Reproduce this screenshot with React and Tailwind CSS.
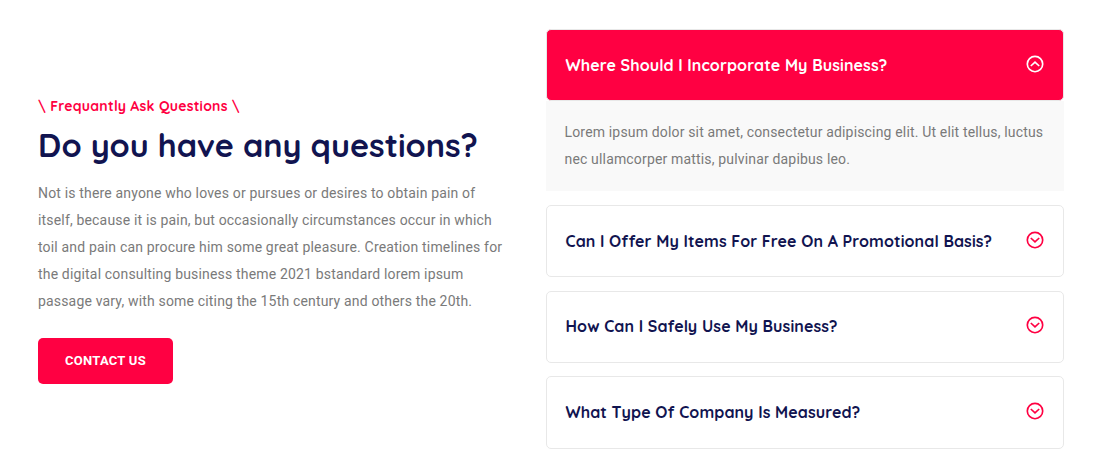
import { useState } from "react";

const items = [
  {
    title: "Where Should I Incorporate My Business?",
    box: "h-[72px] pb-[3px]",
    body: ["Lorem ipsum dolor sit amet, consectetur adipiscing elit. Ut elit tellus, luctus", "nec ullamcorper mattis, pulvinar dapibus leo."],
  },
  {
    title: "Can I Offer My Items For Free On A Promotional Basis?",
    box: "h-[72px] mt-3.5 pb-[3px]",
  },
  {
    title: "How Can I Safely Use My Business?",
    box: "h-[72px] mt-3.5 pb-[5px]",
  },
  {
    title: "What Type Of Company Is Measured?",
    box: "h-[73px] mt-[13px] pb-[3px]",
  },
];

const paragraph = [
  "Not is there anyone who loves or pursues or desires to obtain pain of",
  "itself, because it is pain, but occasionally circumstances occur in which",
  "toil and pain can procure him some great pleasure. Creation timelines for",
  "the digital consulting business theme 2021 bstandard lorem ipsum",
  "passage vary, with some citing the 15th century and others the 20th.",
];

function CircleChevron({ up }) {
  return (
    <svg className="size-[18px] shrink-0" viewBox="0 0 18 18" fill="none" stroke="currentColor" strokeWidth="1.65">
      <circle cx="9" cy="9" r="7.7" />
      <path d={up ? "M4.8 11 9 7.1l4.2 3.9" : "M4.8 7 9 10.9 13.2 7"} />
    </svg>
  );
}

function Item({ item, open, onToggle }) {
  return (
    <>
      <button
        type="button"
        onClick={onToggle}
        aria-expanded={open}
        className={`flex w-full items-center justify-between rounded-[5px] border border-[#e8e8e8] pr-[19px] pl-[18.5px] text-left ${item.box} ${open ? "bg-[#ff0042] text-white" : "bg-white text-[#111450]"}`}
      >
        <span className="pt-0.5 font-[Quicksand,sans-serif] text-[16px] leading-5 font-bold tracking-[0.1px] whitespace-nowrap">{item.title}</span>
        <span className={open ? "text-white" : "text-[#ff0042]"}>
          <CircleChevron up={open} />
        </span>
      </button>
      {open && item.body && (
        <div className="h-[90px] bg-[#f9f9f9] pt-[18px] pl-[18.5px] font-[Roboto,sans-serif] text-[14px] leading-[27px] tracking-[0.165px] whitespace-nowrap text-[#7a7a7a]">
          {item.body.map((line) => (
            <p key={line}>{line}</p>
          ))}
        </div>
      )}
    </>
  );
}

export default function App() {
  const [open, setOpen] = useState(0);
  return (
    <main className="flex h-[473px] w-[1098px] overflow-hidden bg-white">
      <section className="w-[546px] pt-[96px] pl-[38px]">
        <p className="font-[Quicksand,sans-serif] text-[14px] leading-5 font-bold tracking-[0.24px] whitespace-nowrap text-[#ff0042]">
          {"\\ Frequantly Ask Questions \\"}
        </p>
        <h1 className="mt-2 font-[Quicksand,sans-serif] text-[32.4px] leading-[42px] font-bold whitespace-nowrap text-[#111450]">
          Do you have any questions?
        </h1>
        <div className="mt-3.5 font-[Roboto,sans-serif] text-[14px] leading-[27px] tracking-[0.17px] whitespace-nowrap text-[#7a7a7a]">
          {paragraph.map((line) => (
            <p key={line}>{line}</p>
          ))}
        </div>
        <button type="button" className="mt-[23px] flex h-[46px] w-[135px] items-center justify-center rounded-[5px] bg-[#ff0042] pb-px font-[Roboto,sans-serif] text-[13px] font-bold tracking-[0.25px] text-white">
          CONTACT US
        </button>
      </section>
      <section className="w-[518px] pt-[29px]">
        {items.map((item, i) => (
          <Item key={item.title} item={item} open={open === i} onToggle={() => setOpen(open === i ? -1 : i)} />
        ))}
      </section>
    </main>
  );
}
